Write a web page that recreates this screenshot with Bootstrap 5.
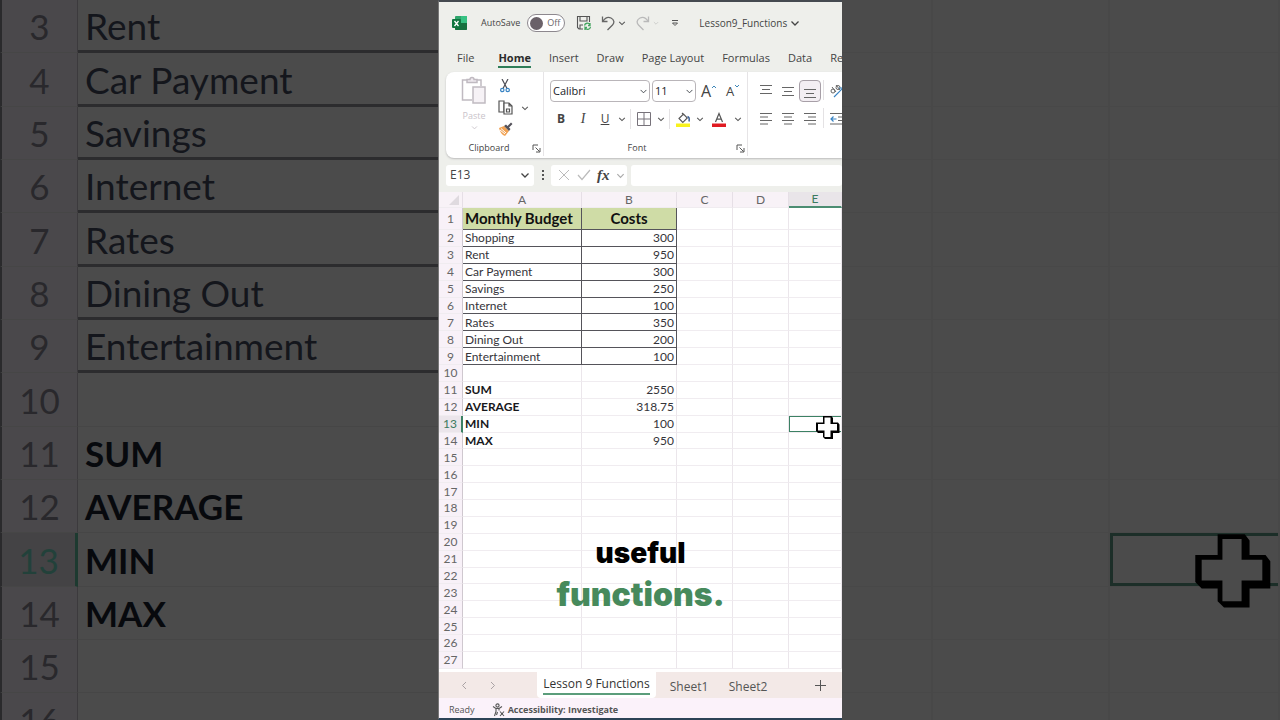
<!DOCTYPE html>
<html lang="en">
<head>
<meta charset="utf-8">
<meta name="viewport" content="width=device-width, initial-scale=1">
<title>Lesson9_Functions</title>
<link href="https://cdn.jsdelivr.net/npm/bootstrap@5.3.0/dist/css/bootstrap.min.css" rel="stylesheet">
<style>
  :root { --ui: "Open Sans", "Noto Sans", sans-serif; --cells: Lato, "Noto Sans", sans-serif; --green: #2f7d58; }
  body { background: #4b4b4b; font-family: var(--ui); font-size: 12px; line-height: 16px; color: #444; }
  button, input, select { font: inherit; color: inherit; }
  svg { display: block; flex: none; }
  .stage { display: grid; grid-template-columns: minmax(0, 1fr) 404px minmax(0, 1fr); height: 100vh; min-height: 720px; overflow: hidden; }

  /* Dimmed, enlarged sheet on both sides */
  .side { overflow: hidden; min-width: 0; }
  .big { height: calc(100% + 27px); table-layout: fixed; border-collapse: separate; border-spacing: 0; font-family: var(--cells); font-size: 37px; line-height: 40px; color: #14161c; }
  .big th, .big td { padding: 0; border-bottom: 1px solid #464646; white-space: nowrap; }
  .big th { width: 78px; font-size: 35px; font-weight: 400; color: #29282c; background: #4a484b; text-align: center; border-left: 2px solid #2a2a2c; border-right: 1px solid #3c3a3d; }
  .big td { padding-left: 7px; }
  .big .ruled td { border-bottom-color: #2c2c2e; box-shadow: inset 0 -2px #2c2c2e; }
  .big .total td { font-weight: 700; font-size: 35px; color: #07090d; }
  .big .active th { color: #22413a; background: #444345; border-right: 3px solid #1d3a30; }
  .blank td { border-right: 2px solid #484848; border-bottom-color: #484848; }
  .blank .picked { position: relative; box-shadow: inset 3px 3px #1c2e28, inset 0 -3px #1c2e28; }
  .blank .picked svg { position: absolute; left: 82px; top: -2px; }

  /* Phone-sized window in the middle */
  .app { background: #eeefeb; border-left: 1px solid #777; border-top: 2px solid #454a50; border-bottom: 2px solid #2c4356; overflow: hidden; min-width: 0; position: relative; }
  .plain { border: 0; background: none; padding: 0; display: flex; align-items: center; justify-content: center; }
  .titlebar { height: 42px; font-size: 10px; padding-left: 12px; white-space: nowrap; }
  .autosave { gap: 7px; margin-left: 13px; font-size: 9px; }
  .pill { width: 38px; height: 18px; border: 1px solid #8d888e; border-radius: 9px; background: #fff; padding-left: 2px; gap: 4px; color: #6b676b; }
  .pill input { appearance: none; width: 13px; height: 13px; border-radius: 50%; background: #6a6169; margin: 0; }
  .tabs { height: 28px; padding-left: 18px; gap: 18px; font-size: 11px; }
  .tabs .nav-link { padding: 6px 0 0; height: 24px; color: #444; white-space: nowrap; }
  .tabs .nav-link.active { font-weight: 700; color: #2b2b2b; border-bottom: 2px solid var(--green); margin-left: 6px; }
  .ribbon { height: 86px; margin-left: 7px; background: #fff; border-radius: 8px 0 0 8px; box-shadow: 0 1px 2px #bbb; }
  .group { flex: none; border-right: 1px solid #e6e4e6; height: 84px; font-size: 9px; }
  .group footer { height: 16px; }
  .tool { width: 22px; height: 22px; font-size: 12px; }
  .drop { width: 12px; height: 22px; color: #555; }
  .split { width: 1px; height: 20px; background: #e4e2e4; }
  .gapped { margin: 0 2px; }
  .field { height: 22px; border: 1px solid #b9b5b9; border-radius: 4px; padding: 0 4px 0 2px; font-size: 11px; background-color: #fff; background-size: 7px 7px; background-position: right 2px center; }
  .boxed { border: 1px solid #a79fa7; border-radius: 4px; background: #f3eef3; }
  .formula { padding: 6px 0 6px 7px; gap: 4px; height: 34px; }
  .formula > div, .formula > input { background: #fff; border-radius: 3px; height: 21px; }
  .namebox { width: 88px; padding: 0 4px; }
  .namebox input { width: 60px; border: 0; background: none; padding: 0; }
  .checks { width: 76px; padding: 0 2px 0 7px; }

  .sheet { background: #fff; overflow: hidden; padding-bottom: 3px; min-height: 0; }
  .cells { width: 100%; height: 100%; table-layout: fixed; border-collapse: separate; border-spacing: 0; font-family: var(--cells); font-size: 12px; line-height: 15px; color: #35343a; }
  .cells th, .cells td { padding: 0 2px; border-right: 1px solid #ebe6eb; border-bottom: 1px solid #f0ecf0; white-space: nowrap; font-weight: 400; }
  .cells thead th { height: 16px; line-height: 14px; background: #f8f2f7; color: #666; text-align: center; border-right-color: #e6dfe6; }
  .cells thead th:last-child { background: #e9e5e9; color: #3b7a60; border-bottom: 2px solid #4b8d72; }
  .cells tbody th { background: #f8f1f8; color: #666; text-align: center; border-right-color: #cfc8cf; padding: 0; }
  .cells td:nth-child(3) { text-align: right; }
  .cells .heading td { height: 22px; background: #cfdca6; border-color: #4b4b4b; font-size: 15px; font-weight: 700; color: #111; }
  .cells .heading td:nth-child(3) { text-align: center; }
  .cells .ruled td:nth-child(-n+3) { border-color: #55545a; }
  .cells .heading td:nth-child(n+4) { background: #fff; border-right-color: #ebe6eb; border-bottom-color: #f0ecf0; }
  .cells .total td:nth-child(2) { font-weight: 700; color: #18181c; }
  .cells .active th { color: #3b7a60; background: #ebe5eb; border-right: 2px solid #3c8164; }
  .cells .picked { position: relative; box-shadow: inset 1px 1px #3c8164, inset 0 -1px #3c8164; }
  .cells .picked svg { position: absolute; left: 26px; top: -1px; }

  .sheets { height: 26px; background: #f3e9e7; color: #555; padding-left: 19px; }
  .sheets button { height: 26px; }
  .sheets .other { padding-top: 4px; }
  .sheets .current { width: 119px; margin-left: 39px; background: #fff; border-radius: 0 0 4px 4px; color: #333; font-weight: 500; }
  .sheets .current span { border-bottom: 2px solid #5b9d7b; line-height: 18px; white-space: nowrap; }
  .status { height: 20px; background: #fbf2fa; padding: 4px 0 0 10px; font-size: 9px; color: #555; gap: 17px; }
  .caption { position: absolute; left: 0; right: 0; top: 531px; text-align: center; font-family: Inter, "Liberation Sans", sans-serif; font-weight: 900; font-size: 28px; line-height: 41px; color: #000; pointer-events: none; }
  .caption b { display: block; font-weight: 900; font-size: 32px; color: #478a5c; }
</style>
</head>
<body>
<svg width="0" height="0" class="position-absolute" aria-hidden="true">
  <symbol id="chev" viewBox="0 0 10 10"><path d="M1.500 3.500 5 7l3.500-3.500" fill="none" stroke="currentColor" stroke-width="1.300"/></symbol>
  <symbol id="launch" viewBox="0 0 9 9"><path d="M1 6V1h5M3.500 3.500 7.500 7.500M8 4v4H4" fill="none" stroke="#555" stroke-width="1"/></symbol>
  <symbol id="cross" viewBox="0 0 25 26"><path d="M8 1h8.500l1.500 2v4.500h5l1.500 2V18h-6.500v6H10l-2-2v-4H3l-2-2V7.500h7z" fill="#000"/><path d="M9.500 2.500h6V9H22v6.500h-6.500V22h-6v-6.500H3V9h6.500z"/></symbol>
</svg>

<main class="stage">
  <section class="side"><table class="big w-100" aria-label="Enlarged budget"><tbody id="bigRows"></tbody></table></section>

  <section class="app d-flex flex-column">
    <header class="titlebar d-flex align-items-center">
      <svg width="17" height="16" viewBox="0 0 17 16"><rect x="4" y="1" width="12" height="14" rx="1" fill="#2fa56c"/><path d="M4 8h12v6a1 1 0 0 1-1 1H5a1 1 0 0 1-1-1z" fill="#16713f"/><path d="M10 1h5a1 1 0 0 1 1 1v6h-6z" fill="#36c283"/><rect x="1" y="4" width="9" height="9" rx="1" fill="#107640"/><path d="m3.500 6 4 5m0-5-4 5" stroke="#fff" stroke-width="1.300"/></svg>
      <label class="autosave d-flex align-items-center">AutoSave
        <span class="pill d-flex align-items-center"><input type="checkbox" role="switch">Off</span></label>
      <button class="plain" style="margin-left:11px" aria-label="Save"><svg width="16" height="16" viewBox="0 0 16 16" fill="none" stroke="#555" stroke-width="1.100"><path d="M7 14H3L1.500 12.500V1.500h12V7M4 1.500V6h7V1.500M4 14v-4h3"/><path d="M8.500 10.500a3 3 0 0 1 5.500-.8V8m0 2.500h-2M14.500 12a3 3 0 0 1-5.500 1v2m0-2.500h2" stroke="#43a45f" stroke-width="1.300"/></svg></button>
      <button class="plain" style="margin-left:9px" aria-label="Undo"><svg width="15" height="16" viewBox="0 0 15 16" fill="none" stroke="#666" stroke-width="1.300"><path d="M1.500 1.500v5h5M1.800 6.300C4 3 7 1.500 10 3c3.500 1.700 3.500 5 1.500 7L6.500 15"/></svg></button>
      <button class="plain drop" aria-label="Undo list"><svg width="8" height="8"><use href="#chev"/></svg></button>
      <button class="plain" style="margin-left:7px" aria-label="Redo" disabled><svg width="15" height="16" viewBox="0 0 15 16" fill="none" stroke="#b9b9b9" stroke-width="1.300"><path d="M13.500 1.500v5h-5M13.200 6.300C11 3 8 1.500 5 3 1.500 4.700 1.500 8 3.500 10l5 5"/></svg></button>
      <button class="plain drop opacity-25" aria-label="Redo list"><svg width="6" height="6"><use href="#chev"/></svg></button>
      <button class="plain drop" style="margin-left:7px" aria-label="Customize toolbar"><svg width="8" height="8" viewBox="0 0 8 8" fill="none" stroke="#555"><path d="M1 1.500h6M1.500 4 4 6.500 6.500 4z"/></svg></button>
      <button class="plain" style="margin-left:18px;gap:3px">Lesson9_Functions <svg width="10" height="10"><use href="#chev"/></svg></button>
    </header>

    <nav class="nav tabs flex-nowrap">
      <a class="nav-link" href="#">File</a><a class="nav-link active" href="#">Home</a><a class="nav-link" href="#">Insert</a><a class="nav-link" href="#">Draw</a><a class="nav-link" href="#">Page Layout</a><a class="nav-link" href="#">Formulas</a><a class="nav-link" href="#">Data</a><a class="nav-link" href="#">Review</a>
    </nav>

    <section class="ribbon d-flex">
      <div class="group d-flex flex-column justify-content-between" style="width:98px">
        <div class="d-flex pt-1 ps-2">
          <button class="plain flex-column justify-content-start" style="width:40px;color:#c9c3ca"><svg width="26" height="28" viewBox="0 0 26 28" fill="none" stroke="#c0bac1" stroke-width="1.500"><path d="M11 24H1.500V4H6m10 0h4v6"/><path d="M6 6.500V3.500h3a2 2 0 0 1 4 0h3v3z" fill="#eee9ee"/><path d="M12 11h12v16H12z" fill="#f6f2f6"/></svg><span class="pt-1">Paste</span><svg width="7" height="7"><use href="#chev"/></svg></button>
          <div class="d-flex flex-column">
            <button class="plain tool" style="height:20px" aria-label="Cut"><svg width="10" height="14" viewBox="0 0 10 14" fill="none"><path d="M2 0 7 9.500M8 0 3 9.500" stroke="#4d4d55" stroke-width="1.200"/><circle cx="2.300" cy="11" r="1.700" stroke="#3984c4" stroke-width="1.200"/><circle cx="7.700" cy="11" r="1.700" stroke="#3984c4" stroke-width="1.200"/></svg></button>
            <button class="plain tool" aria-label="Copy"><svg width="15" height="15" viewBox="0 0 15 15" fill="#fff" stroke="#555" stroke-width="1.200"><path d="M1 1h5v11H1z"/><path d="M6 3h5l3 3v8H6zM11 3v3h3M8.500 9h3v3h-3z"/></svg></button>
            <button class="plain tool" aria-label="Format painter"><svg width="15" height="14" viewBox="0 0 15 14"><path d="M1 6l5-2 5 5-4 5C4 13 2 10 1 6z" fill="#f1a253"/><path d="M3 6.500 8 11M2 8l5 4" stroke="#fff"/><path d="M6 4 8 2.500 9.500 4 13 .500 14.500 2 11 5.500 12.500 7 11 9z" fill="#55535b"/></svg></button>
          </div>
          <button class="plain drop align-self-center" style="margin-left:3px" aria-label="Copy options"><svg width="8" height="8"><use href="#chev"/></svg></button>
        </div>
        <footer class="d-flex align-items-center"><span style="width:86px" class="text-center">Clipboard</span><svg width="9" height="9"><use href="#launch"/></svg></footer>
      </div>

      <div class="group d-flex flex-column" style="width:204px">
        <div class="d-flex align-items-center" style="padding:8px 0 0 6px;gap:2px">
          <select class="form-select field" style="width:100px" aria-label="Font"><option>Calibri</option></select>
          <select class="form-select field" style="width:44px" aria-label="Font size"><option>11</option></select>
          <button class="plain tool" aria-label="Grow font"><span style="font-size:16px">A</span><svg width="6" height="14" viewBox="0 0 6 14"><path d="M1 4l2-2 2 2" stroke="#3c86b8" fill="none"/></svg></button>
          <button class="plain tool" aria-label="Shrink font"><span style="font-size:13px">A</span><svg width="6" height="14" viewBox="0 0 6 14"><path d="M1 1l2 2 2-2" stroke="#3c86b8" fill="none"/></svg></button>
        </div>
        <div class="d-flex align-items-center" style="padding:6px 0 0 6px">
          <button class="plain tool fw-bold">B</button>
          <button class="plain tool fst-italic" style="font-family:'Liberation Serif',serif;font-size:14px">I</button>
          <button class="plain tool text-decoration-underline">U</button>
          <button class="plain drop" aria-label="Underline style"><svg width="8" height="8"><use href="#chev"/></svg></button>
          <span class="split gapped"></span>
          <button class="plain tool" aria-label="Borders"><svg width="14" height="14" viewBox="0 0 14 14" fill="none" stroke="#77727a"><path d="M.500.500h13v13H.500zM7 .500v13M.500 7h13"/></svg></button>
          <button class="plain drop" aria-label="Border style"><svg width="8" height="8"><use href="#chev"/></svg></button>
          <span class="split gapped"></span>
          <button class="plain tool" aria-label="Fill colour"><svg width="15" height="15" viewBox="0 0 15 15"><path d="M3 6.500 7.500 2l3.800 4-4.500 4.500zM6 1l2 2" fill="#fff" stroke="#555" stroke-width="1.100"/><path d="M11.500 4.500c2 .500 2 2.500 1.500 5" stroke="#3c5f94" stroke-width="1.500" fill="none"/><path d="M0 11.500h14V15H0z" fill="#f8f21d"/></svg></button>
          <button class="plain drop" aria-label="Fill list"><svg width="8" height="8"><use href="#chev"/></svg></button>
          <button class="plain tool gapped" aria-label="Font colour"><svg width="14" height="15" viewBox="0 0 14 15"><path d="M3.500 10 7 1.500l3.500 8.500M4.700 7.200h4.600" fill="none" stroke="#555" stroke-width="1.200"/><path d="M0 11.500h14V15H0z" fill="#e01b22"/></svg></button>
          <button class="plain drop" aria-label="Font colour list"><svg width="8" height="8"><use href="#chev"/></svg></button>
        </div>
        <footer class="d-flex align-items-center mt-auto"><span style="width:192px;padding-right:6px" class="text-center">Font</span><svg width="9" height="9"><use href="#launch"/></svg></footer>
      </div>

      <div class="group d-flex flex-column" style="padding:8px 0 0 7px;gap:6px">
        <div class="d-flex">
          <button class="plain tool" aria-label="Top align"><svg width="14" height="14" viewBox="0 0 14 14" stroke="#666"><path d="M1 1.500h12M3 5.500h8M1 9.500h12"/></svg></button>
          <button class="plain tool" aria-label="Middle align"><svg width="14" height="14" viewBox="0 0 14 14" stroke="#666"><path d="M1 3.500h12M3 7.500h8M1 11.500h12"/></svg></button>
          <button class="plain tool boxed" aria-label="Bottom align"><svg width="14" height="14" viewBox="0 0 14 14" stroke="#666"><path d="M1 5.500h12M3 9.500h8M1 13.500h12"/></svg></button>
          <span class="split gapped"></span>
          <button class="plain tool" aria-label="Orientation"><svg width="16" height="16" viewBox="0 0 16 16" fill="none" stroke="#666"><circle cx="4" cy="8" r="2"/><path d="m3 4 4 5M7 2l4 5"/><circle cx="9" cy="4.500" r="2"/><path d="M5 14 14 5m-4 0h4v4" stroke="#3984c4" stroke-width="1.200"/></svg></button>
        </div>
        <div class="d-flex">
          <button class="plain tool" aria-label="Align left"><svg width="14" height="14" viewBox="0 0 14 14" stroke="#666"><path d="M1 1.500h12M1 5h8M1 8.500h12M1 12h8"/></svg></button>
          <button class="plain tool" aria-label="Centre"><svg width="14" height="14" viewBox="0 0 14 14" stroke="#666"><path d="M1 1.500h12M3 5h8M1 8.500h12M3 12h8"/></svg></button>
          <button class="plain tool" aria-label="Align right"><svg width="14" height="14" viewBox="0 0 14 14" stroke="#666"><path d="M1 1.500h12M5 5h8M1 8.500h12M5 12h8"/></svg></button>
          <span class="split gapped"></span>
          <button class="plain tool" aria-label="Decrease indent"><svg width="14" height="14" viewBox="0 0 14 14" fill="none" stroke="#666"><path d="M0 1.500h14M8 5h6M8 8.500h6M0 12h14"/><path d="M6.500 7H1m2.500-2.500L1 7l2.500 2.500" stroke="#3984c4" stroke-width="1.200"/></svg></button>
        </div>
      </div>
    </section>

    <section class="formula d-flex align-items-center">
      <div class="namebox d-flex align-items-center justify-content-between flex-shrink-0"><input value="E13" aria-label="Name box"><svg width="10" height="10"><use href="#chev"/></svg></div>
      <svg width="9" height="12" viewBox="0 0 9 12" fill="#555"><path d="M4 1h2v2H4zM4 5h2v2H4zM4 9h2v2H4z"/></svg>
      <div class="checks d-flex align-items-center justify-content-between flex-shrink-0">
        <button class="plain" aria-label="Cancel"><svg width="12" height="12" viewBox="0 0 12 12" stroke="#bbb"><path d="m1 1 10 10M11 1 1 11"/></svg></button>
        <button class="plain" aria-label="Enter"><svg width="14" height="12" viewBox="0 0 14 12" fill="none" stroke="#bbb" stroke-width="1.200"><path d="m1 6 4 4.500L13 1"/></svg></button>
        <button class="plain fst-italic fw-bold" style="font-family:'Liberation Serif',serif;font-size:15px">fx</button>
        <svg width="9" height="9" style="color:#aaa"><use href="#chev"/></svg>
      </div>
      <input class="border-0 flex-grow-1" style="min-width:0" aria-label="Formula bar">
    </section>

    <section class="sheet flex-grow-1">
      <table class="cells">
        <colgroup><col style="width:24px"><col style="width:119px"><col style="width:95px"><col style="width:56px"><col style="width:56px"><col></colgroup>
        <thead><tr><th aria-label="Select all"><svg class="ms-auto" width="12" height="12" viewBox="0 0 12 12"><path d="M11 1v10H1z" fill="#dfdadf"/></svg></th><th>A</th><th>B</th><th>C</th><th>D</th><th>E</th></tr></thead>
        <tbody id="rows"></tbody>
      </table>
    </section>

    <nav class="sheets d-flex align-items-center" aria-label="Sheets">
      <button class="plain" style="width:12px" aria-label="Previous"><svg width="9" height="9" viewBox="0 0 9 9" fill="none" stroke="#a9a2a4"><path d="M6 1 2.500 4.500 6 8"/></svg></button>
      <button class="plain" style="width:12px;margin-left:16px" aria-label="Next"><svg width="9" height="9" viewBox="0 0 9 9" fill="none" stroke="#a9a2a4"><path d="M3 1l3.500 3.500L3 8"/></svg></button>
      <button class="plain current"><span>Lesson 9 Functions</span></button>
      <button class="plain other" style="width:66px">Sheet1</button>
      <button class="plain other" style="width:52px">Sheet2</button>
      <button class="plain ms-auto me-3" aria-label="Add sheet"><svg width="11" height="11" viewBox="0 0 11 11" stroke="#555"><path d="M5.500 0v11M0 5.500h11"/></svg></button>
    </nav>
    <footer class="status d-flex align-items-center"><span>Ready</span>
      <span class="d-flex align-items-center fw-bold" style="gap:3px"><svg width="13" height="14" viewBox="0 0 13 14" fill="none" stroke="#555" stroke-width="1.100"><circle cx="5.500" cy="2.500" r="1.600"/><path d="M1 3.500 4 5.500v3L2.500 13M10 3.500 7 5.500v2M4 5.500h3M5.500 9 4.500 12M8 8.500l4 4.500m0-4.500L8 13"/></svg>Accessibility: Investigate</span>
    </footer>
    <p class="caption mb-0">useful<b>functions.</b></p>
  </section>

  <section class="side"><table class="big blank w-100" aria-hidden="true"><colgroup><col style="width:91px"><col style="width:177px"><col></colgroup><tbody id="blankRows"></tbody></table></section>
</main>

<script src="https://cdn.jsdelivr.net/npm/bootstrap@5.3.0/dist/js/bootstrap.bundle.min.js"></script>
<script>
  const data = {
    1: ['Monthly Budget', 'Costs'], 2: ['Shopping', 300], 3: ['Rent', 950], 4: ['Car Payment', 300], 5: ['Savings', 250],
    6: ['Internet', 100], 7: ['Rates', 350], 8: ['Dining Out', 200], 9: ['Entertainment', 100],
    11: ['SUM', 2550], 12: ['AVERAGE', 318.75], 13: ['MIN', 100], 14: ['MAX', 950]
  };
  const kind = n => (n === 1 ? 'heading ' : '') + (n < 10 ? 'ruled' : n > 10 && n < 15 ? 'total' : '') + (n === 13 ? ' active' : '');
  const cross = (w, h, fill) => `<svg width="${w}" height="${h}" fill="${fill}"><use href="#cross"/></svg>`;
  let small = '', big = '', blank = '';
  for (let n = 1; n <= 27; n++) {
    const [a, b] = data[n] || ['', ''];
    const e = n === 13 ? `<td class="picked">${cross(25, 26, '#fff')}</td>` : '<td></td>';
    small += `<tr class="${kind(n)}"><th scope="row">${n}</th><td>${a}</td><td>${b}</td><td></td><td></td>${e}</tr>`;
    if (n > 2 && n < 17) {
      big += `<tr class="${kind(n)}"><th scope="row">${n}</th><td>${a}</td></tr>`;
      blank += `<tr><td>&nbsp;</td><td></td>${n === 13 ? `<td class="picked">${cross(80, 83, '#4b4b4b')}</td>` : '<td></td>'}</tr>`;
    }
  }
  document.getElementById('rows').innerHTML = small;
  document.getElementById('bigRows').innerHTML = big;
  document.getElementById('blankRows').innerHTML = blank;
</script>
</body>
</html>
